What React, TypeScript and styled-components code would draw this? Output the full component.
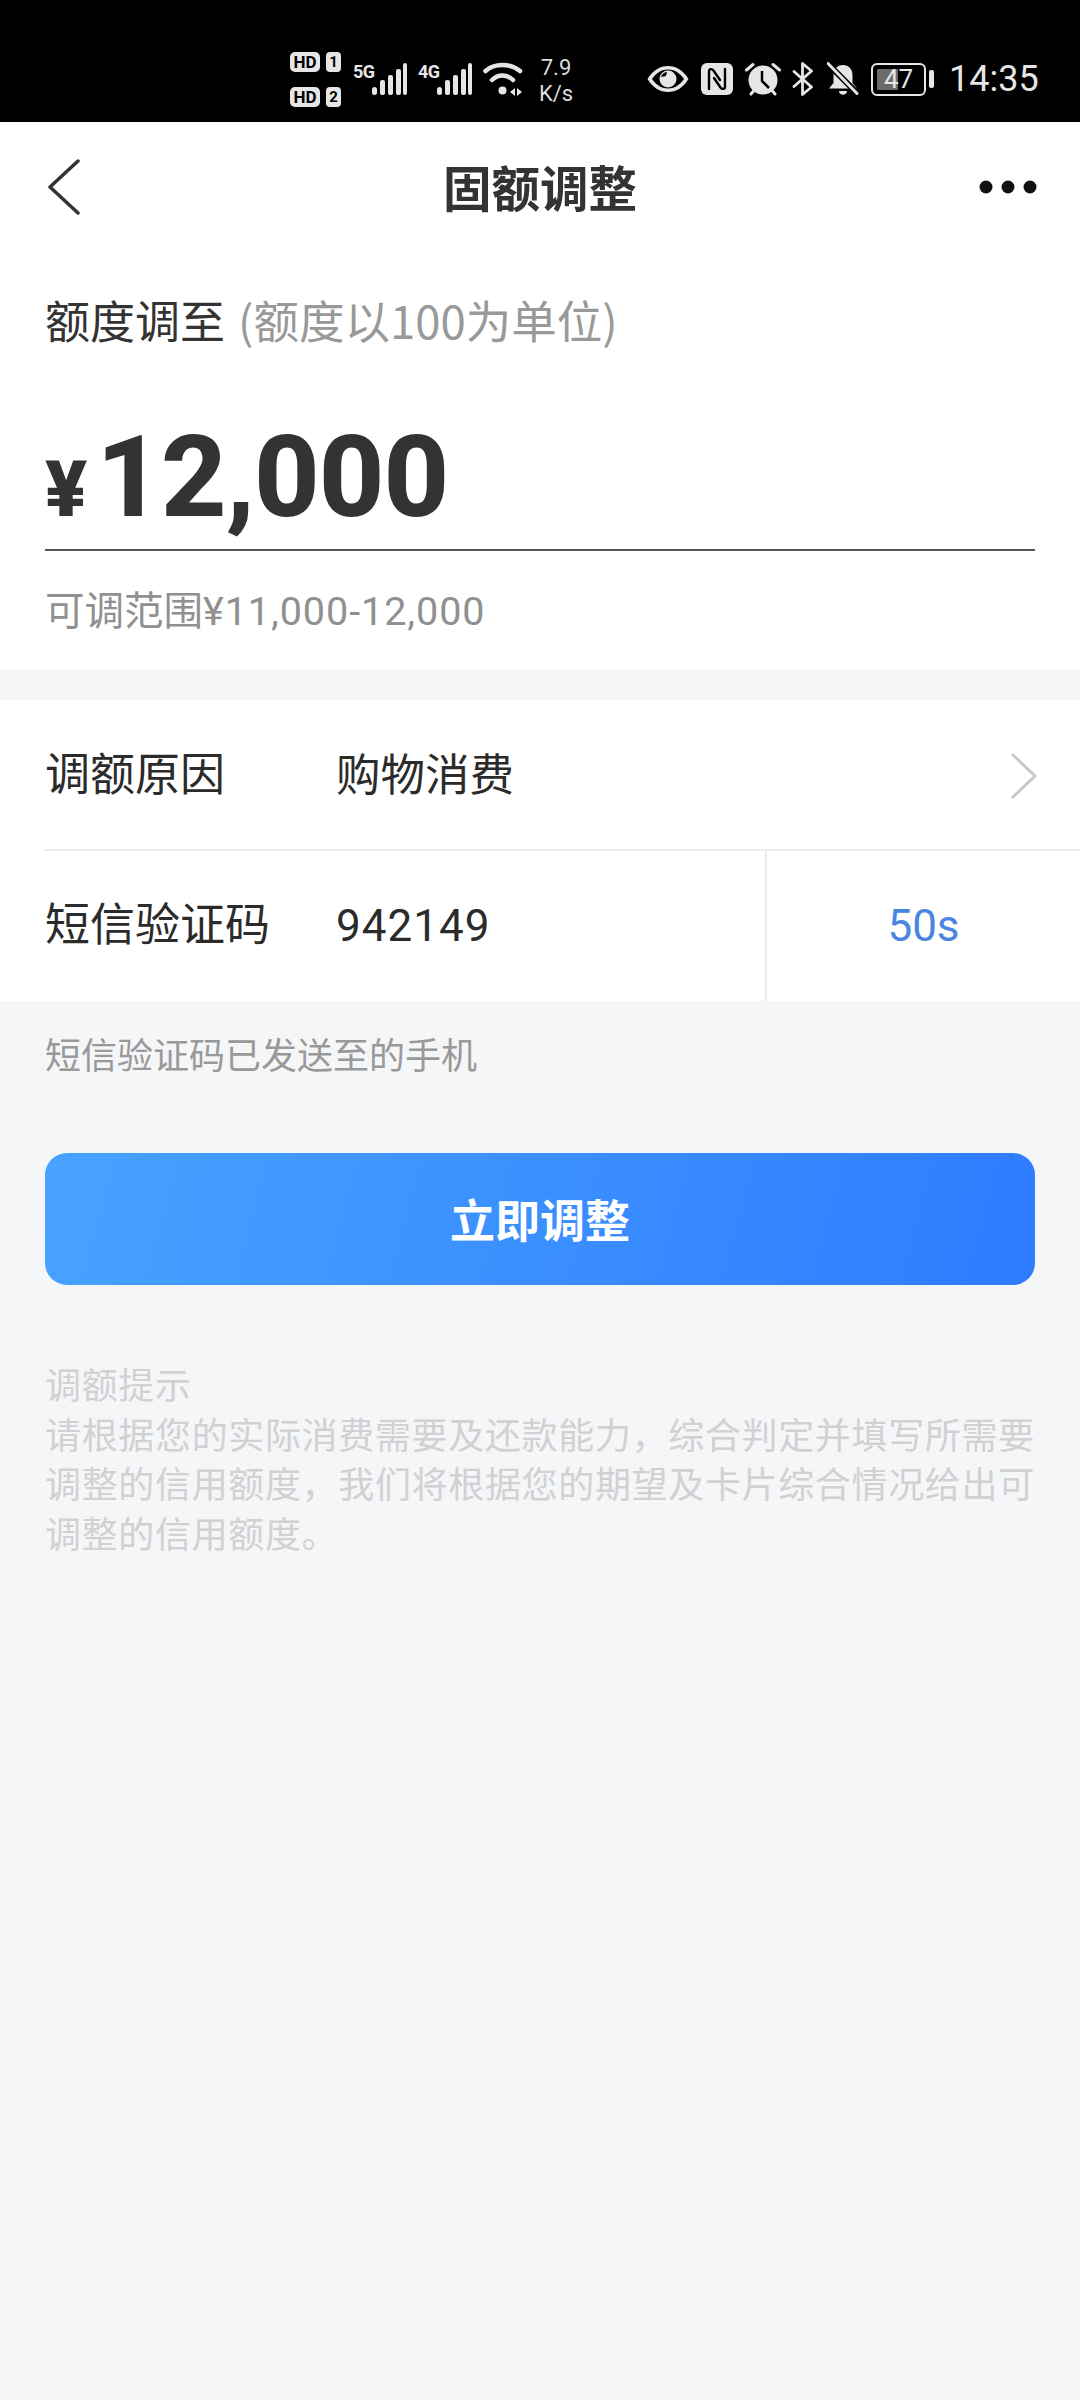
import React from "react";
import styled, { createGlobalStyle } from "styled-components";

const Global = createGlobalStyle`
  html, body { margin: 0; padding: 0; background: #f5f6f8; }
  body { font-family: "Roboto", "Noto Sans CJK SC", sans-serif; }
  * { box-sizing: border-box; }
`;
const Page = styled.div`width: 1080px; height: 2400px; background: #f5f6f8; overflow: hidden;`;

const StatusBar = styled.div`
  height: 122px; background: #000; color: #e6e6e6; display: flex; align-items: center;
  padding: 36px 0 0 290px; font-family: "Roboto", sans-serif;
`;
const SimColumn = styled.div`display: flex; flex-direction: column; gap: 15px; width: 51px; margin-right: 12px;`;
const SimRow = styled.div`display: flex; justify-content: space-between;`;
const HdBadge = styled.span`
  width: 30px; height: 20px; background: #e6e6e6; color: #000; border-radius: 5px;
  font: 700 17px/20px "Roboto", sans-serif; text-align: center;
`;
const SimBadge = styled.span`
  width: 15px; height: 20px; background: #e6e6e6; color: #000; border-radius: 4px;
  font: 700 15px/20px "Roboto", sans-serif; text-align: center;
`;
const NetGroup = styled.div`display: flex; align-items: flex-start; height: 33px; margin-right: 11px;`;
const NetLabel = styled.span`
  font: 700 18px/18px "Liberation Sans Narrow", "Roboto", sans-serif; width: 18px; letter-spacing: -0.5px;
`;
const SpeedBlock = styled.div`
  width: 40px; margin: 4px 71px 0 13px; font: 400 22px/26px "Roboto", sans-serif; text-align: center;
  color: #dcdcdc;
`;
const SpeedLine = styled.div`white-space: nowrap; height: 26px;`;
const StatusIcon = styled.svg<{ $mr: number }>`flex: none; display: block; margin-right: ${p => p.$mr}px;`;
const BatteryBox = styled.div`
  width: 55px; height: 33px; border: 2.5px solid #e6e6e6; border-radius: 6px; position: relative;
  display: flex; align-items: center; justify-content: center; margin-right: 3px; flex: none;
  font: 400 26px/28px "Roboto", sans-serif; color: #e6e6e6; padding: 3px;
`;
const BatteryLevel = styled.div`
  position: absolute; left: 4px; top: 4px; bottom: 4px; width: 21px; background: #6b6b6b; border-radius: 1px;
`;
const BatteryText = styled.span`position: relative;`;
const BatteryNub = styled.div`width: 5px; height: 18px; background: #e6e6e6; border-radius: 2px; margin-right: 15px; flex: none;`;
const Clock = styled.span`font: 400 36px/36px "Roboto", sans-serif; color: #e6e6e6; white-space: nowrap;`;

const Top = styled.div`background: #fff; height: 548px;`;
const NavBar = styled.div`
  height: 130px; padding: 0 45px; display: grid; grid-template-columns: 1fr auto 1fr; align-items: center;
`;
const NavBack = styled.svg`justify-self: start; margin-left: 2px;`;
const NavMore = styled.svg`justify-self: end; margin-right: -2px;`;
const NavTitle = styled.h1`
  margin: -2px 0 0; font: 700 48.500px/60px "Noto Sans CJK SC", sans-serif; color: #333;
`;
const Label = styled.div`
  padding: 37px 45px 0; font: 400 45px/60px "Noto Sans CJK SC", sans-serif; color: #333;
`;
const LabelNote = styled.span`color: #999; font-size: 45.500px; margin-left: 13px;`;
const AmountRow = styled.div`
  margin: 69px 45px 0; padding-bottom: 14px; border-bottom: 2px solid #555;
  display: flex; align-items: baseline;
`;
const Yen = styled.span`font: 900 78px/78px "Roboto", sans-serif; color: #333; margin-right: 9px;`;
const Amount = styled.span`font: 800 114px/116px "Roboto", sans-serif; color: #333; letter-spacing: -1px;`;
const Range = styled.div`
  padding: 32px 45px 0; font: 400 39.500px/50px "Noto Sans CJK SC", sans-serif; color: #909090;
`;
const RangeDigits = styled.span`font-family: "Roboto", sans-serif; letter-spacing: 0.95px;`;

const Form = styled.div`margin-top: 30px; background: #fff;`;
const Row = styled.div`
  padding-left: 45px; display: flex; align-items: center;
  font: 400 45px/60px "Roboto", "Noto Sans CJK SC", sans-serif; color: #2b2b2b;
`;
const ReasonRow = styled(Row)`height: 149px; padding-top: 2px;`;
const CodeRow = styled(Row)`height: 150px;`;
const Rule = styled.div`margin-left: 45px; height: 2px; background: #ececec;`;
const FieldName = styled.span`width: 291px; flex: none;`;
const FieldValue = styled.span`flex: 1; font-size: 44px; letter-spacing: 1px;`;
const PlainValue = styled.span`flex: 1; font-size: 44.500px;`;
const Chevron = styled.svg`margin-right: 43px; flex: none;`;
const Countdown = styled.div`
  width: 315px; height: 100%; border-left: 2px solid #ececec; flex: none; display: flex; align-items: center;
  justify-content: center; font: 400 44px/50px "Roboto", sans-serif; color: #4a86e0;
`;
const CodeHint = styled.div`
  padding: 27px 45px 0; font: 400 36px/50px "Noto Sans CJK SC", sans-serif; color: #999;
`;
const Submit = styled.button`
  display: block; width: 990px; height: 132px; margin: 75px 45px 0; border: 0; border-radius: 22px;
  background: linear-gradient(105deg, #47a3ff 0%, #2e7bff 100%);
  font: 700 45px/60px "Noto Sans CJK SC", sans-serif; color: #fff; padding: 0;
`;
const Tips = styled.div`
  margin: 74px 45px 0; font: 400 36px/49.500px "Noto Sans CJK SC", sans-serif; color: #d0d1d3;
  letter-spacing: 0.66px;
`;

const bars = (
  <svg width="36" height="33" viewBox="0 0 36 33" fill="#e6e6e6">
    <rect x="1" y="24" width="5" height="8" rx="2.500" /><rect x="9" y="17" width="5" height="15" rx="2" /><rect x="17" y="12" width="5" height="20" rx="2" /><rect x="25" y="6" width="5" height="26" rx="2" /><rect x="32" y="0" width="4" height="32" rx="2" />
  </svg>
);

export default function App() {
  return (
    <Page>
      <Global />
      <StatusBar>
        <SimColumn>
          <SimRow><HdBadge>HD</HdBadge><SimBadge>1</SimBadge></SimRow>
          <SimRow><HdBadge>HD</HdBadge><SimBadge>2</SimBadge></SimRow>
        </SimColumn>
        <NetGroup><NetLabel>5G</NetLabel>{bars}</NetGroup>
        <NetGroup><NetLabel>4G</NetLabel>{bars}</NetGroup>
        <svg width="40" height="34" viewBox="0 0 40 34" fill="none" stroke="#e6e6e6" strokeWidth="4.500" strokeLinecap="round">
          <path d="M2.500 9C11 1 28 1 37 9" />
          <path d="M9 18C15 12 24 12 30 18" />
          <circle cx="19.500" cy="28.500" r="4" fill="#e6e6e6" stroke="none" />
          <path d="M27 30l5-4v8zM34 26l5 4-5 4z" fill="#e6e6e6" stroke="none" />
        </svg>
        <SpeedBlock>
          <SpeedLine>7.9</SpeedLine>
          <SpeedLine>K/s</SpeedLine>
        </SpeedBlock>
        <StatusIcon $mr={12} width="42" height="28" viewBox="0 0 42 28">
          <path d="M0.500 14C6 5 13 1 21 1s15 4 20.500 13C36 23 29 27 21 27S6 23 0.500 14z" fill="#e6e6e6" />
          <path d="M5 14C9.500 7.500 15 4.500 21 4.500S32.500 7.500 37 14C32.500 20.500 27 23.500 21 23.500S9.500 20.500 5 14z" fill="#000" />
          <circle cx="21" cy="14" r="8.500" fill="#e6e6e6" />
          <path d="M14 12a7 7 0 0 1 6-5l-1 4z" fill="#000" />
        </StatusIcon>
        <StatusIcon $mr={12} width="32" height="32" viewBox="0 0 32 32">
          <rect x="0" y="0" width="32" height="32" rx="6" fill="#e6e6e6" />
          <g fill="none" stroke="#000" strokeWidth="2.400" strokeLinecap="round">
            <path d="M8 26V8.500c0-3 3-3 4.500-1L19 17" />
            <path d="M24 6v17.500c0 3-3 3-4.500 1L13 15" />
          </g>
        </StatusIcon>
        <StatusIcon $mr={11} width="36" height="34" viewBox="0 0 36 34">
          <circle cx="18" cy="18" r="14.500" fill="#e6e6e6" />
          <path d="M17 9v10l7 7" fill="none" stroke="#000" strokeWidth="2.500" />
          <path d="M1.500 8L8 2.500M34.500 8L28 2.500M6 32l3-3.500M30 32l-3-3.500" stroke="#e6e6e6" strokeWidth="3" strokeLinecap="round" />
        </StatusIcon>
        <StatusIcon $mr={13} width="22" height="34" viewBox="0 0 22 34">
          <path d="M2 9.500L19.500 25 10.500 32.500V1.500L19.500 9 2 24.500" fill="none" stroke="#e6e6e6" strokeWidth="2.800" strokeLinecap="round" strokeLinejoin="round" />
        </StatusIcon>
        <StatusIcon $mr={12} width="32" height="34" viewBox="0 0 32 34">
          <path d="M16 3c6 0 9.500 4.500 9.500 10v8l4.500 5.500H2L6.500 21v-8C6.500 7.500 10 3 16 3z" fill="#e6e6e6" />
          <path d="M12 29h8c0 5-8 5-8 0z" fill="#e6e6e6" />
          <path d="M0 1l31 31" stroke="#000" strokeWidth="6" />
          <path d="M1 1.500l29 30" stroke="#e6e6e6" strokeWidth="3" strokeLinecap="round" />
        </StatusIcon>
        <BatteryBox>
          <BatteryLevel />
          <BatteryText>47</BatteryText>
        </BatteryBox>
        <BatteryNub />
        <Clock>14:35</Clock>
      </StatusBar>
      <Top>
        <NavBar>
          <NavBack width="34" height="56" viewBox="0 0 34 56" fill="none" stroke="#333" strokeWidth="3.500" strokeLinecap="round" strokeLinejoin="round">
            <path d="M31 2L3 28l28 26" />
          </NavBack>
          <NavTitle>固额调整</NavTitle>
          <NavMore width="58" height="14" viewBox="0 0 58 14" fill="#111">
            <circle cx="7" cy="7" r="6.500" /><circle cx="29" cy="7" r="6.500" /><circle cx="51" cy="7" r="6.500" />
          </NavMore>
        </NavBar>
        <Label>额度调至<LabelNote>(额度以100为单位)</LabelNote></Label>
        <AmountRow><Yen>¥</Yen><Amount>12,000</Amount></AmountRow>
        <Range>可调范围<RangeDigits>¥11,000-12,000</RangeDigits></Range>
      </Top>
      <Form>
        <ReasonRow>
          <FieldName>调额原因</FieldName>
          <PlainValue>购物消费</PlainValue>
          <Chevron width="26" height="46" viewBox="0 0 26 46" fill="none" stroke="#c8c8c8" strokeWidth="3" strokeLinecap="round" strokeLinejoin="round">
            <path d="M2 2l22 21L2 44" />
          </Chevron>
        </ReasonRow>
        <Rule />
        <CodeRow>
          <FieldName>短信验证码</FieldName>
          <FieldValue>942149</FieldValue>
          <Countdown>50s</Countdown>
        </CodeRow>
      </Form>
      <CodeHint>短信验证码已发送至的手机</CodeHint>
      <Submit>立即调整</Submit>
      <Tips>
        调额提示<br />
        请根据您的实际消费需要及还款能力，综合判定并填写所需要调整的信用额度，我们将根据您的期望及卡片综合情况给出可调整的信用额度。
      </Tips>
    </Page>
  );
}
